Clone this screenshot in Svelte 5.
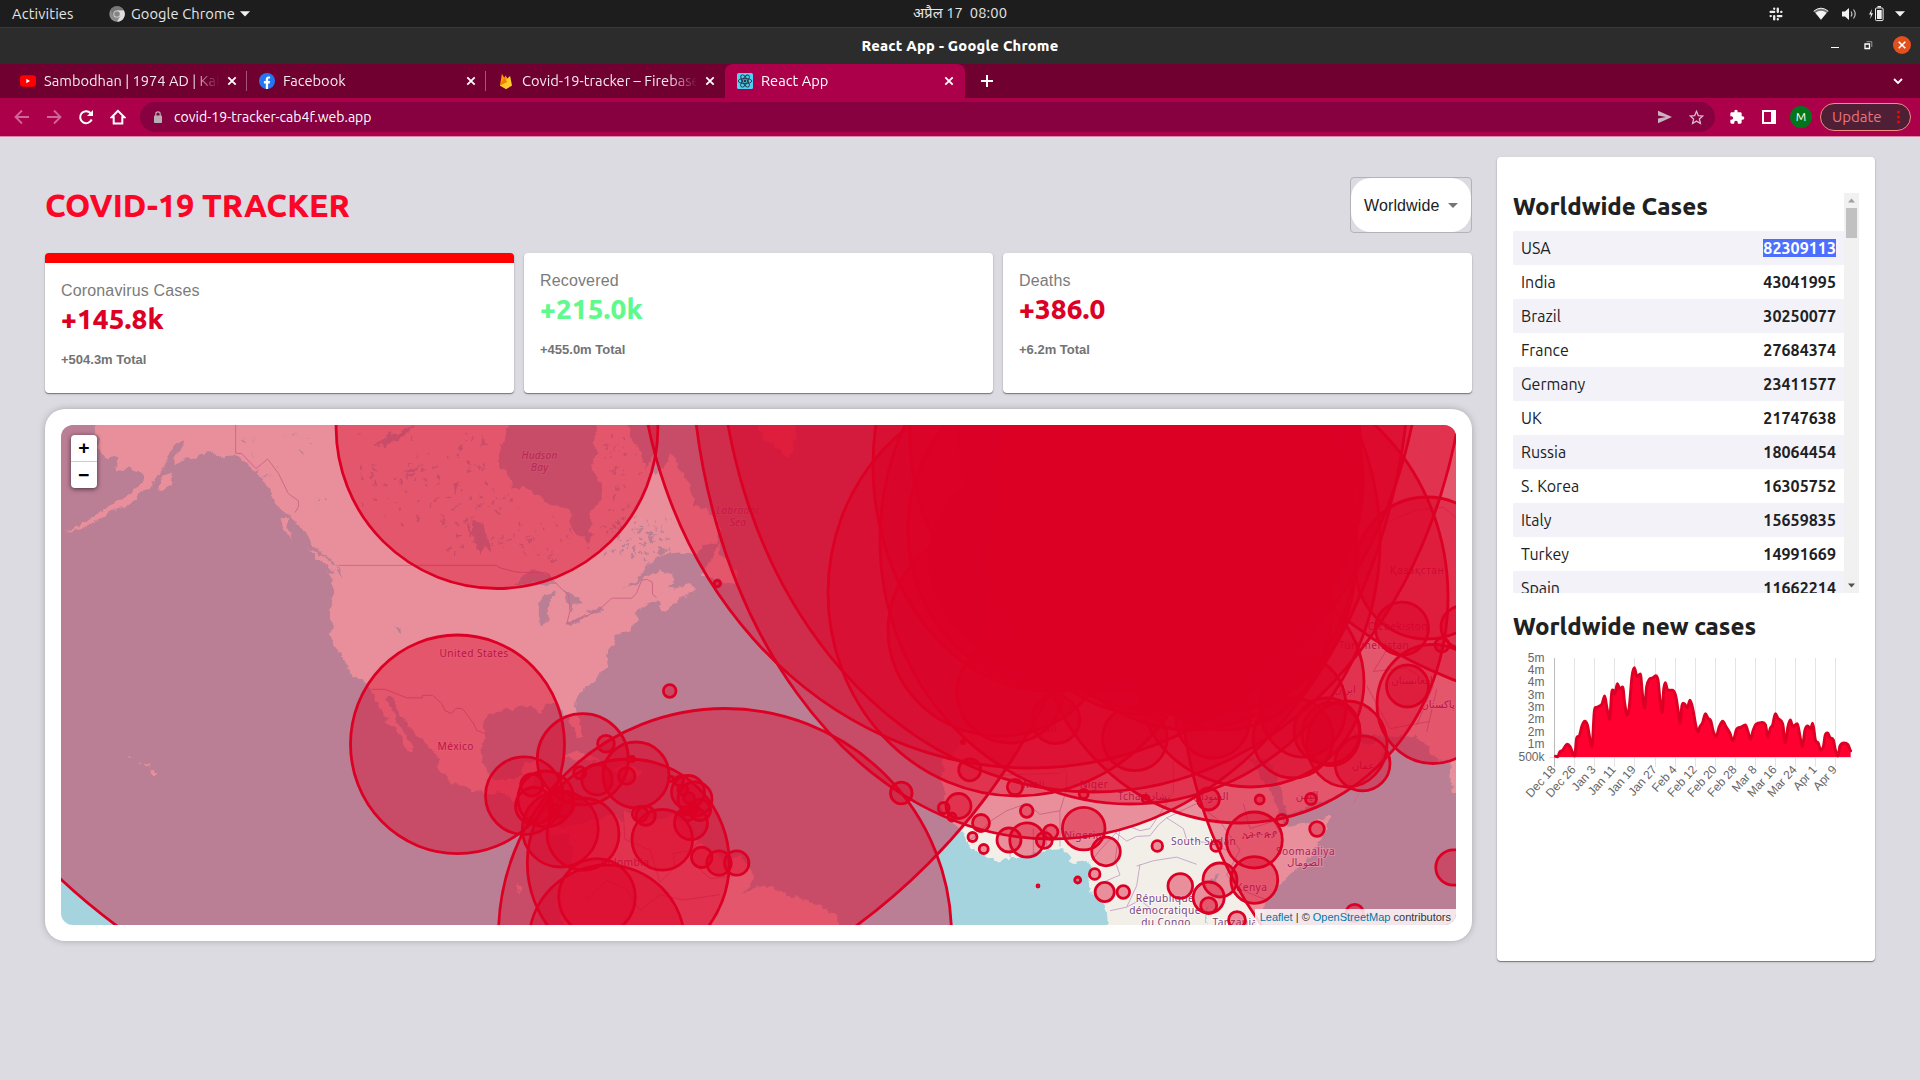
<script>
  const tabs = [
    { icon: 'youtube', label: 'Sambodhan | 1974 AD | Kat' },
    { icon: 'facebook', label: 'Facebook' },
    { icon: 'firebase', label: 'Covid-19-tracker – Firebase' },
    { icon: 'react', label: 'React App', active: true }
  ];

  const stats = [
    { title: 'Coronavirus Cases', value: '+145.8k', total: '+504.3m Total', selected: true },
    { title: 'Recovered', value: '+215.0k', total: '+455.0m Total', green: true },
    { title: 'Deaths', value: '+386.0', total: '+6.2m Total' }
  ];

  const countries = [
    ['USA', '82309113'], ['India', '43041995'], ['Brazil', '30250077'], ['France', '27684374'],
    ['Germany', '23411577'], ['UK', '21747638'], ['Russia', '18064454'], ['S. Korea', '16305752'],
    ['Italy', '15659835'], ['Turkey', '14991669'], ['Spain', '11662214']
  ];

  // Case circles: centre x, centre y, horizontal radius, optional vertical radius.
  const circles = [
    [486.5, 423, 624], [1030, 325, 392, 443], [1051, 339, 360, 500], [1093, 322, 374, 470],
    [1630, 667, 450], [1602, 289, 418], [725, 935, 226.5], [1240, 597, 208, 226],
    [1130, 540, 250, 264], [1017, 593, 189, 203], [1050, 465, 177, 226], [1251, 682, 113, 105],
    [1000, 630, 112, 106], [497, 427.6, 160.9], [457.5, 744.3, 107, 109.3], [1427, 568, 71, 71],
    [1060, 530, 152, 160], [1180, 480, 183, 190], [1120, 560, 190, 130], [1150, 600, 120, 110],
    [1190, 540, 167, 190], [1150, 500, 170, 215], [1225, 610, 107, 120], [1230, 560, 126, 150],
    [1215, 470, 146, 180], [1160, 440, 200, 210], [1080, 440, 170, 190],
    [1010, 692, 53, 51], [1055.7, 719.6, 24], [1134.8, 738.4, 32.3], [1213, 718, 37, 40],
    [1293, 738, 40], [1331, 734, 29, 31.6], [1327, 731, 33], [1347, 744, 40, 43],
    [1362.5, 763.4, 27.5], [1303, 707, 43, 50], [1433, 704, 56, 59.5], [1407.5, 686, 21],
    [1402, 628.6, 26.5], [1462, 627, 21], [1442, 645, 7], [969.7, 769.8, 11], [958.5, 806, 12.5],
    [943.7, 808, 5.5], [952, 817, 4], [981, 823, 8.5], [963, 742, 1.5], [1015, 787, 7.7],
    [1083.7, 794, 4.5], [1145.7, 799, 3.5], [1208.5, 799, 11], [1259.7, 799.5, 4.5], [1311, 799, 5.5],
    [1026.7, 811, 6.3], [972.5, 837, 4.5], [983.7, 849, 4.5], [1009, 840, 12], [1027, 840, 17.2],
    [1050.7, 832, 7.2], [1044.3, 840.4, 8], [1083.7, 828.6, 21.3], [1106, 851.5, 14.3], [1157.3, 846, 5.3],
    [1216, 846, 5.3], [1282, 820, 5.5], [1317, 829, 7.3], [1254.3, 840, 28], [1254.3, 880, 23.4],
    [1220, 880, 17], [1208.7, 897.5, 15.5], [1208.7, 905.7, 8], [1180.3, 886, 12.3], [1094.7, 874, 5.3],
    [1077.7, 880, 3], [1038, 886, 1], [1104.7, 892, 9.6], [1123.3, 892, 6.3], [1237, 920, 8.4],
    [1354.7, 913, 8.7], [1453.5, 867.5, 17.7], [628.3, 863, 101, 104], [582.8, 759.3, 45.6],
    [524.3, 795.7, 38.8], [636, 775, 33], [597, 779.7, 15.3], [606, 743.7, 8.4], [632, 759, 2.5],
    [626.7, 776, 8.3], [579.7, 772.7, 6], [545.8, 799, 28], [534, 806, 18.5], [531.7, 785, 11],
    [560.3, 829, 38], [583, 834, 36], [561, 804, 13], [554, 810, 5.5], [597, 897, 38.3],
    [606.7, 943, 78], [662.3, 839.8, 30.3], [640, 814, 7.7], [645.7, 815.7, 9.6], [691, 823, 16.5],
    [701.7, 857.3, 10.2], [719, 863, 12.2], [736.7, 863, 12.2], [688, 792, 16.5], [695, 799, 17],
    [700, 810, 10.5], [679, 781, 4.5], [671, 779, 2.5], [689, 798, 5.3], [683, 790, 5],
    [688, 815, 5.5], [685, 811, 4], [693, 808, 5], [669.7, 691, 6.3], [717.3, 583.6, 3.2], [901.3, 793, 10.8]
  ];

  const labels = [
    ['United States', 474, 657], ['México', 455.7, 750], ['Colombia', 625, 866],
    ['Mali', 1034, 788], ['Niger', 1094, 788], ['Tchad تشاد', 1144, 800], ['السودان', 1211, 800],
    ['Nigeria', 1083, 838.5], ['South Sudan', 1203.7, 845], ['ኢትዮጵያ', 1259.7, 838],
    ['Soomaaliya', 1305.5, 854.5], ['الصومال', 1305, 866], ['Kenya', 1251.7, 891],
    ['République', 1165, 901.5], ['démocratique', 1165, 913.5], ['du Congo', 1166, 925.5],
    ['Tanzania', 1235, 926], ['Қазақстан', 1417, 574], ['Oʻzbekiston', 1398, 630],
    ['Türkmenistan', 1374, 649], ['افغانستان', 1412, 684], ['پاکستان', 1438, 708],
    ['ایران', 1345, 693], ['عمان', 1363, 769], ['اليمن', 1307, 799], ['الجزائر', 1042, 732]
  ];
  const seaLabels = [
    ['Hudson', 539.5, 458.5], ['Bay', 539.5, 470.5], ['Labrador', 738, 514], ['Sea', 738, 526]
  ];

  // Small lakes scattered over the Canadian Shield and the Rockies.
  let seed = 11;
  const rand = () => (seed = (seed * 16807) % 2147483647) / 2147483647;
  const lakes = [];
  const scatter = (n, x, y, w, h, size) => {
    for (let i = 0; i < n; i++) {
      lakes.push({ x: x + rand() * w, y: y + rand() * h, rx: 2 + rand() * size, ry: 1 + rand() * size * 0.5, a: rand() * 180 - 90 });
    }
  };
  scatter(70, 960, 90, 400, 260, 8);
  scatter(50, 1200, 250, 260, 180, 6);
  scatter(60, 1710, 330, 190, 130, 8);
  scatter(35, 1690, 100, 110, 260, 7);
  scatter(35, 1430, 330, 300, 120, 6);
  scatter(18, 600, 90, 260, 190, 5);

  const curve = [
    226,589,233,590,240,575,248,571,262,553,270,560,284,588,290,535,298,528,306,498,314,484,322,495,336,560,
    343,455,350,443,366,432,374,408,380,440,389,478,395,400,399,390,405,402,412,371,419,386,428,381,434,430,
    442,466,448,440,456,350,463,323,471,350,481,342,487,400,494,444,500,380,508,358,518,354,527,347,534,360,
    540,420,547,457,551,390,556,368,563,391,578,391,587,408,594,450,600,490,606,437,613,431,622,444,630,421,
    638,445,648,500,654,516,660,500,668,488,676,461,684,475,692,482,700,515,708,530,718,500,728,484,738,500,
    750,520,759,543,770,508,782,502,796,495,804,515,811,538,820,510,828,493,843,488,856,494,864,532,871,505,
    878,495,886,461,894,475,908,492,916,549,924,500,931,480,938,500,952,491,960,530,967,560,975,510,983,498,
    992,507,998,490,1006,540,1014,548,1022,570,1030,560,1036,525,1043,519,1050,533,1060,540,1066,570,
    1074,588,1080,558,1092,549,1104,554,1112,572
  ];
  const pts = [];
  for (let i = 0; i < curve.length; i += 2) pts.push([(curve[i] - 99) / 3, (curve[i + 1] - 270) / 3]);
  const tangent = (i) => {
    const a = pts[i - 1], b = pts[i], c = pts[i + 1];
    if (!a || !c || (b[1] - a[1]) * (c[1] - b[1]) <= 0) return 0;
    return (c[1] - a[1]) / (c[0] - a[0]);
  };
  let line = `M${pts[0][0]} ${pts[0][1]}`;
  for (let i = 1; i < pts.length; i++) {
    const [ax, ay] = pts[i - 1], [bx, by] = pts[i];
    const h = (bx - ax) / 3;
    line += `C${ax + h} ${ay + h * tangent(i - 1)} ${bx - h} ${by - h * tangent(i)} ${bx} ${by}`;
  }
  const area = `${line}V107H42.3Z`;

  const ticks = ['Dec 18','Dec 26','Jan 3','Jan 11','Jan 19','Jan 27','Feb 4','Feb 12','Feb 20','Feb 28','Mar 8','Mar 16','Mar 24','Apr 1','Apr 9']
    .map((t, i) => ({ t, x: 41.5 + i * 20 + (i > 4 ? 1 : 0) }));
  const levels = [['5m', 8], ['4m', 20], ['4m', 32], ['3m', 45], ['3m', 57], ['2m', 69], ['2m', 82], ['1m', 94], ['500k', 107]];
</script>

{#snippet closeX()}
  <svg class="x" width="10" height="10" viewBox="0 0 10 10"><path d="M1.3 1.3l7.4 7.4M8.7 1.3L1.3 8.7" /></svg>
{/snippet}

<div class="screen">
  <header class="system">
    <span class="activities">Activities</span>
    <svg class="chrome" width="16" height="16" viewBox="0 0 16 16">
      <circle cx="8" cy="8" r="7.7" fill="#8b8b8b" /><path d="M8 4.2h6.8A7.7 7.7 0 0 1 8 15.7l3.4-5.8Z" fill="#dedede" />
      <path d="M1.3 4.2A7.7 7.7 0 0 1 14.8 4.3H8L4.6 10Z" fill="#777" />
      <circle cx="8" cy="8" r="3.6" fill="#ddd" /><circle cx="8" cy="8" r="2.8" fill="#858585" />
    </svg>
    <span class="appname">Google Chrome</span>
    <svg width="10" height="6" viewBox="0 0 10 6"><path d="M0 .3h10L5 5.6Z" fill="#f2f2f2" /></svg>
    <span class="clock">अप्रैल 17&nbsp; 08:00</span>
    <div class="tray">
      <svg width="14" height="14" viewBox="0 0 14 14" fill="none" stroke="#ededed" stroke-width="2.3" stroke-linecap="round">
        <path d="M5.2 1.6v.2M5.2 4.9H1.6M8.8 1.6v3.3M12.4 4.9h-.2M8.8 12.4v-.2M8.8 9.1h3.6M5.2 12.4V9.1M1.6 9.1h.2" />
      </svg>
      <svg class="wifi" width="16" height="14" viewBox="0 0 16 14"><path d="M.7 4.2Q8-1.8 15.3 4.2L8 12.8Z" fill="#777" /><path d="M.7 4.2Q8-1.8 15.3 4.2" fill="none" stroke="#f2f2f2" /><path d="M2.4 5.7Q8 2 13.6 5.7L8 12.8Z" fill="#f4f4f4" /></svg>
      <svg class="vol" width="15" height="14" viewBox="0 0 15 14"><path d="M0 4.5h3L7 1v12L3 9.5H0Z" fill="#f2f2f2" /><path d="M9 4.5q1.8 2.5 0 5M11.5 2.5q3.4 4.5 0 9" fill="none" stroke="#c4c4c4" stroke-width="1.2" /></svg>
      <svg class="bat" width="15" height="16" viewBox="0 0 15 16"><path d="M3 3L0 8.5h2L1.2 13 4 7.3H2.2Z" fill="#eee" /><rect x="6.5" y="2" width="7.6" height="12.6" rx="1" fill="none" stroke="#eee" /><path d="M8 4h4.7v9H8ZM8.5 0h3.5v1.5H8.5Z" fill="#eee" /></svg>
      <svg class="down" width="10" height="6" viewBox="0 0 10 6"><path d="M0 .3h10L5 5.6Z" fill="#f2f2f2" /></svg>
    </div>
  </header>

  <div class="titlebar">
    <strong>React App - Google Chrome</strong>
    <div class="winbtns">
      <svg width="8" height="10" viewBox="0 0 8 10"><path d="M0 7.500h8" stroke="#fff" /></svg>
      <svg width="9" height="9" viewBox="0 0 9 9"><path d="M1 3h4.500v4.500H1Z" fill="none" stroke="#fff" stroke-width="1.3" /><path d="M2.500 .7h5.300V6" fill="none" stroke="#999" /></svg>
      <svg width="18" height="18" viewBox="0 0 18 18"><circle cx="9" cy="9" r="9" fill="#e2501e" /><path d="M5.700 5.700l6.600 6.600M12.300 5.700l-6.600 6.600" stroke="#fff" stroke-width="1.6" /></svg>
    </div>
  </div>

  <nav class="tabs">
    {#each tabs as tab, i}
      <div class="tab" class:active={tab.active} class:sep={i < 2}>
        <svg width="16" height="16" viewBox="0 0 16 16">
          {#if tab.icon === 'youtube'}
            <rect y="2.2" width="16" height="11.6" rx="3" fill="#f00" /><path d="M6.3 5.8v4.4L10 8Z" fill="#fff" />
          {:else if tab.icon === 'facebook'}
            <circle cx="8" cy="8" r="8" fill="#2477f3" /><path d="M6.8 16v-5.6H4.9V8.1h1.900V6.600c0-2 1.100-3 2.800-3 .7 0 1.500.1 1.500.1v1.800h-.9c-.9 0-1.100.5-1.100 1.100v1.500h2l-.4 2.300H9.100V16Z" fill="#fff" />
          {:else if tab.icon === 'firebase'}
            <path d="M2 12.500L3.900.7l2.400 4.100 1.300-2.300 6 10.300L8 16Z" fill="#ff9900" /><path d="M2 12.600L12.100 3l1.900 9.600L8 16Z" fill="#ffcb2b" /><path d="M2 12.600L6.300 4.800l3 4.100Z" fill="#f57c00" />
          {:else}
            <rect width="16" height="16" rx="1.500" fill="#4fd0f5" />
            <g fill="none" stroke="#263845" stroke-width=".9"><ellipse cx="8" cy="8" rx="6.800" ry="2.600" /><ellipse cx="8" cy="8" rx="6.800" ry="2.600" transform="rotate(60 8 8)" /><ellipse cx="8" cy="8" rx="6.800" ry="2.600" transform="rotate(120 8 8)" /></g><circle cx="8" cy="8" r="1.400" fill="#263845" />
          {/if}
        </svg>
        <span class="tablabel">{tab.label}</span>
        {@render closeX()}
      </div>
    {/each}
    <svg class="plus" width="12" height="12" viewBox="0 0 12 12"><path d="M6 0v12M0 6h12" stroke="#fff" stroke-width="2" /></svg>
    <svg class="chev" width="10" height="7" viewBox="0 0 10 7"><path d="M1 1l4 4 4-4" fill="none" stroke="#fff" stroke-width="1.800" /></svg>
  </nav>

  <div class="toolbar">
    <svg class="dim" width="16" height="16" viewBox="0 0 16 16"><path d="M15 8H2M8 1.500L1.500 8 8 14.500" /></svg>
    <svg class="dim" width="16" height="16" viewBox="0 0 16 16"><path d="M1 8h13M8 1.500L14.500 8 8 14.500" /></svg>
    <svg class="lit" width="16" height="16" viewBox="0 0 16 16"><path d="M13.700 10.500A6 6 0 1 1 12.500 4" /><path d="M15 1v6H9Z" fill="#fff" stroke="none" /></svg>
    <svg class="lit" width="16" height="16" viewBox="0 0 16 16"><path d="M8 1.800L1.500 8.300H3.700V14.500h8.600V8.300h2.200Z" /></svg>
    <div class="omni">
      <svg width="10" height="13" viewBox="0 0 10 13"><rect x="1" y="4.500" width="8" height="7.500" rx=".8" fill="#b8aeb4" /><path d="M2.800 5V3a2.200 2.200 0 0 1 4.400 0v2" fill="none" stroke="#b8aeb4" stroke-width="1.200" /></svg>
      <span class="url">covid-19-tracker-cab4f.web.app</span>
      <svg width="14" height="14" viewBox="0 0 14 14"><path d="M0 .8L14 7 0 13.200V8.500L8 7 0 5.500Z" fill="#c9b3bf" /></svg>
      <svg width="15" height="15" viewBox="0 0 15 15"><path d="M7.500 1.300l1.800 4.300 4.500.4-3.400 3 1 4.500-3.900-2.400-3.900 2.400 1-4.500-3.400-3 4.500-.4Z" fill="none" stroke="#dbb8ca" stroke-width="1.300" /></svg>
    </div>
    <svg class="puzzle" width="16" height="16" viewBox="0 0 24 24"><path d="M20.5 11H19V7a2 2 0 0 0-2-2h-4V3.500a2.500 2.500 0 0 0-5 0V5H4a2 2 0 0 0-2 2v3.800h1.500a2.700 2.700 0 0 1 0 5.400H2V20a2 2 0 0 0 2 2h3.800v-1.500a2.700 2.700 0 0 1 5.400 0V22H17a2 2 0 0 0 2-2v-4h1.500a2.500 2.500 0 0 0 0-5Z" fill="#fff" /></svg>
    <svg class="side" width="14" height="14" viewBox="0 0 14 14"><path fill-rule="evenodd" d="M0 0h14v14H0ZM2 2v10h7V2Z" fill="#fff" /></svg>
    <span class="avatar">M</span>
    <div class="update">Update <svg width="3" height="14" viewBox="0 0 3 14" fill="#f00"><circle cx="1.500" cy="2" r="1.500" /><circle cx="1.500" cy="7" r="1.500" /><circle cx="1.500" cy="12" r="1.500" /></svg></div>
  </div>

  <main>
    <section class="left">
      <div class="head">
        <h1>COVID-19 TRACKER</h1>
        <div class="select"><div class="inner">Worldwide <svg width="10" height="5" viewBox="0 0 10 5"><path d="M0 0h10L5 5Z" fill="#757575" /></svg></div></div>
      </div>
      <div class="stats">
        {#each stats as s}
          <article class:selected={s.selected}>
            <p>{s.title}</p>
            <h2 class:green={s.green}>{s.value}</h2>
            <small>{s.total}</small>
          </article>
        {/each}
      </div>
      <div class="mapcard">
        <div class="map">
          <svg width="1395" height="500" viewBox="61 425 1395 500">
            <filter id="coast" x="-5%" y="-5%" width="110%" height="110%" color-interpolation-filters="sRGB">
              <feTurbulence type="fractalNoise" baseFrequency=".045" numOctaves="3" seed="4" />
              <feDisplacementMap in="SourceGraphic" scale="22" xChannelSelector="R" yChannelSelector="G" />
            </filter>
            <rect x="61" y="425" width="1395" height="500" fill="#a5d4df" />
            <!-- Land, lakes and borders on a finer grid than the page -->
            <g transform="translate(40 400) scale(.333333 .357143)">
              <g filter="url(#coast)">
              <g fill="#f2efe9">
                <path d="M175 30L165 92 182 108 172 130 196 160 225 158 232 200 262 192 300 205 312 222 290 244 262 266 235 283 205 300 175 318 130 344 75 374 115 364 155 345 192 324 225 306 262 300 290 270 330 248 352 215 370 195 382 165 392 140 410 122 435 112 425 138 402 160 405 183 432 165 470 160 500 147 540 158 585 155 620 175 648 203 665 215 680 245 700 270 705 290 728 310 745 322 770 345 800 375 815 405 850 430 885 455 905 475 903 500 892 480 865 485 880 520 878 560 870 605 876 630 872 660 885 690 905 715 920 745 938 775 970 785 990 800 1003 830 1025 870 1045 892 1033 900 1070 925 1085 950 1100 975 1120 986 1127 975 1100 945 1080 910 1062 878 1035 835 1045 828 1062 835 1075 870 1100 905 1130 940 1165 965 1195 1000 1193 1030 1225 1065 1260 1075 1300 1093 1340 1105 1380 1098 1410 1115 1430 1140 1480 1180 1520 1210 1560 1215 1585 1220 1600 1280 1560 1363 1555 1420 1580 1510H2410L2390 1445 2340 1415 2310 1405 2240 1385 2200 1365 2150 1362 2105 1385 2142 1340 2140 1325 2100 1275 2050 1290 1975 1240 1945 1190 1900 1165 1850 1172 1800 1165 1750 1150 1748 1180 1720 1158 1640 1180 1600 1192 1560 1200 1540 1170 1545 1110 1530 1090 1475 1085 1482 1062 1500 1025 1488 1010 1455 1020 1440 1055 1400 1065 1355 1060 1335 1030 1325 990 1335 935 1330 905 1345 885 1370 875 1400 862 1430 868 1450 855 1480 860 1500 875 1520 855 1560 850 1572 872 1585 895 1600 918 1615 945 1627 940 1620 905 1605 862 1608 835 1630 810 1660 790 1685 765 1702 745 1695 715 1715 690 1722 660 1765 648 1790 625 1785 600 1800 582 1830 570 1850 560 1862 585 1880 590 1900 570 1935 550 1972 530 1955 515 1910 530 1890 525 1900 500 1895 485 1860 480 1830 490 1790 515 1750 530 1790 505 1820 465 1860 435 1920 430 1965 435 1990 410 2030 400 2042 360 2025 330 2000 305 1965 295 1950 250 1920 190 1890 145 1885 170 1850 210 1832 200 1845 140 1820 190 1805 150 1775 110 1750 30Z" />
                <path d="M355 245L372 215 400 205 388 240 362 258ZM722 330L745 332 742 360 758 388 730 365ZM805 415L850 436 903 475 885 480 840 452ZM332 1035L342 1032 352 1044 333 1053ZM308 1018l20 3 3 6-12-3ZM293 1008l8 6-6 0ZM262 998l14 0-5 5ZM1980 490L2020 440 2035 400 2042 430 2070 460 2095 490 2090 515 2050 510 2020 500ZM2135 30L2170 110 2210 130 2245 165 2260 150 2275 30ZM1565 998L1610 985 1660 998 1700 1020 1640 1005 1590 1003ZM1710 1035L1760 1020 1810 1045 1760 1055ZM1430 1358l15 8-5 14-12-6Z" />
                <path d="M2900 30H4290V1110L4238 1100 4230 1005 4190 1010 4130 940 4040 945 3940 930 3960 960 4040 965 4020 1010 3960 1070 3860 1120 3735 1165 3725 1180 3750 1195 3820 1180 3868 1168 3860 1200 3820 1270 3760 1320 3720 1360 3675 1410 3660 1510H3208L3205 1450 3190 1420 3170 1390 3150 1375 3145 1340 3155 1310 3145 1290 3110 1295 3090 1290 3070 1258 3020 1260 2970 1275 2910 1280 2865 1292 2820 1270 2780 1240 2770 1215 2750 1190 2700 1160 2705 1130 2715 1100 2705 1060 2710 1010 2750 980 2770 940 2800 860Z" />
              </g>
              <g fill="#a5d4df">
                <path d="M1425 30L1390 110 1377 150 1378 195 1400 198 1418 248 1450 243 1490 265 1530 295 1590 305 1592 350 1625 385 1645 403 1652 360 1650 312 1685 275 1683 235 1655 200 1670 150 1662 110 1685 30Z" />
                <path d="M1422 518L1480 472 1530 490 1548 520 1500 512ZM1495 580L1505 545 1555 535 1530 560 1520 620 1500 630ZM1570 535L1610 550 1630 570 1598 570 1592 600 1577 560ZM1575 628L1605 612 1650 600 1620 620 1585 634ZM1640 590L1680 578 1695 588 1650 600Z" />
                <path d="M1275 345L1290 352 1300 375 1305 340 1322 340 1345 380 1350 425 1332 405 1318 432 1300 385ZM1000 122L1035 110 1050 82 1060 100 1110 72H1128L1070 115 1030 132ZM1080 205l70-25-30 20ZM1240 235l20-10-12 40ZM1065 632l12 2 5 14-10-5ZM3630 1000L3690 1010 3710 1060 3735 1150 3760 1165 3740 1183 3720 1160 3700 1110 3665 1060ZM3505 1345l30-20-5 22-20 10ZM3495 1410l8 60h-8Z" />
                {#each lakes as l}<ellipse cx={l.x} cy={l.y} rx={l.rx} ry={l.ry} transform="rotate({l.a} {l.x} {l.y})" />{/each}
              </g>
              </g>
              <g class="borders">
                <path d="M895 463H1370L1380 470 1430 482 1520 484 1560 525 1585 545 1590 590 1580 628 1640 605 1680 585 1715 555H1775L1790 540 1805 505 1820 502 1837 510 1838 545 1850 553M587 70V149L605 150 648 192 683 165 715 205 745 262 775 282V300L765 315M995 810H1035L1100 834H1147V827H1178L1205 850 1215 870 1235 878 1248 863 1268 865 1300 905 1310 925 1335 934" />
                <path d="M1750 1160L1755 1230 1830 1260 1860 1350 1905 1310 1900 1270 1960 1260 1970 1240M1640 1400L1700 1345 1760 1370 1800 1430 1860 1385 1930 1400 2040 1385M1975 1310L2010 1340 2100 1330" />
                <path d="M2780 1240L2820 1210 2850 1180 2900 1150 2960 1130 3000 1160 3060 1150 3080 1090V1040M2890 1050L3060 1045 3100 1010M3400 1010V1100L3380 1130 3330 1200 3300 1206 3270 1195 3240 1200 3232 1245 3225 1290 3240 1330 3190 1350M3225 1210L3260 1235 3290 1222 3330 1220 3355 1190 3380 1170 3430 1200 3440 1230 3500 1240 3560 1260M3380 1170L3470 1130 3540 1180 3600 1260M3290 1305L3340 1290 3410 1280 3470 1300M3300 1300L3290 1360 3260 1420 3210 1430M3610 1130L3630 1200 3700 1180 3720 1210M2980 1200V1275M3020 1200V1258M2910 1240V1280M3600 1260L3560 1330 3600 1370 3680 1400M3060 1150V1250M3240 1200L3180 1260 3155 1290M3340 1430L3300 1400 3260 1420" />
                <path d="M3940 1130L4000 1030M3980 800L4050 920 4170 900M4040 345L4120 310 4210 300 4248 330M4040 700L4000 760 4100 750 4180 800 4130 910M4190 810L4160 930" />
              </g>
            </g>
            <g class="names">
              {#each labels as [t, x, y]}<text {x} {y}>{t}</text>{/each}
            </g>
            <g class="names sea">
              {#each seaLabels as [t, x, y]}<text {x} {y}>{t}</text>{/each}
            </g>
            <g class="circles">
              {#each circles as [cx, cy, rx, ry]}<ellipse {cx} {cy} {rx} ry={ry ?? rx} />{/each}
            </g>
          </svg>
          <div class="zoom"><span>+</span><span>−</span></div>
          <div class="credit"><a href="#leaflet">Leaflet</a> | © <a href="#osm">OpenStreetMap</a> contributors</div>
        </div>
      </div>
    </section>

    <aside>
      <div class="scroll">
        <div class="listing">
          <h3>Worldwide Cases</h3>
          {#each countries as [name, n], i}
            <div class="row"><span>{name}</span><b class:hl={i === 0}>{n}</b></div>
          {/each}
        </div>
        <div class="bar">
          <svg width="15" height="15" viewBox="0 0 15 15"><path d="M4 9.500h7L7.500 5.500Z" fill="#a0a0a0" /></svg>
          <i></i>
          <svg class="bottom" width="15" height="15" viewBox="0 0 15 15"><path d="M4 5.500h7L7.500 9.500Z" fill="#505050" /></svg>
        </div>
      </div>
      <h3 class="second">Worldwide new cases</h3>
      <svg class="chart" width="346" height="160" viewBox="0 0 346 160">
        {#each ticks as k, i}
          <path d="M{k.x} 8V117" stroke={i === 0 ? '#bbb' : '#e4e4e4'} />
          <text class="tick" transform="translate({k.x + 2} 120) rotate(-48)">{k.t}</text>
        {/each}
        <path d="M36 107.500H338" stroke="#e4e4e4" />
        {#each levels as [t, y]}<text class="tick" x="31.500" y={y + 4}>{t}</text>{/each}
        <path d={area} fill="#ff0030" />
        <path d={line} fill="none" stroke="#dd0025" stroke-width="3" stroke-linejoin="round" stroke-linecap="round" />
      </svg>
    </aside>
  </main>
</div>

<style>
  :global(body) { margin: 0; }
  .screen {
    width: 1920px; height: 1080px; overflow: hidden; display: flex; flex-direction: column;
    background: #dcdbe1; font-family: Ubuntu, "Noto Sans", "Open Sans", sans-serif; color: #202124;
  }
  svg { display: block; flex: none; }
  .system { height: 27px; background: #1d1d1d; display: flex; align-items: center; color: #e6e6e6; font-size: 14.670px; position: relative; }
  .activities { width: 97px; padding-left: 12px; letter-spacing: .15px; }
  .appname { margin: 0 5px 0 6px; width: 104px; white-space: nowrap; letter-spacing: .08px; }
  .clock { position: absolute; left: 0; right: 0; text-align: center; top: 4px; line-height: 18px; letter-spacing: .1px; }
  .tray { margin-left: auto; display: flex; align-items: center; padding-right: 15px; }
  .wifi { margin-left: 30px; } .vol { margin-left: 13px; } .bat { margin-left: 12px; } .down { margin-left: 11px; }
  .titlebar { height: 37px; border-top: 1px solid #3a3a3a; background: #2c2c2c; box-sizing: border-box; display: flex; align-items: center; justify-content: center; color: #fff; font-size: 14.670px; position: relative; }
  .titlebar strong { font-weight: 800; letter-spacing: .22px; padding-bottom: 2px; }
  .winbtns { position: absolute; right: 9px; top: 8px; display: flex; align-items: center; gap: 25px; }
  .winbtns svg:last-child { margin-left: -5px; }
  .tabs { height: 34px; background: #700030; display: flex; align-items: center; color: #f5e9ee; font-size: 14.670px; padding-left: 8px; }
  .tab { width: 239px; height: 34px; box-sizing: border-box; display: flex; align-items: center; padding: 0 10px 0 12px; gap: 8px; position: relative; }
  .tab.sep::after { content: ''; position: absolute; right: 0; top: 7px; width: 1px; height: 20px; background: #a3557a; }
  .tab.active { background: #ad004b; border-radius: 8px 8px 0 0; width: 240px; color: #fff; padding-right: 11px; }
  .tablabel { flex: 1; overflow: hidden; white-space: nowrap; padding-bottom: 2px; mask-image: linear-gradient(90deg, #000 84%, transparent); }
  .x path { stroke: #fff; stroke-width: 1.8; }
  .plus { margin-left: 16px; } .chev { margin-left: auto; margin-right: 17px; }
  .toolbar { height: 38px; background: #ad004b; display: flex; align-items: center; padding-left: 14px; gap: 16px; border-bottom: 1px solid #d984a9; }
  .dim path { fill: none; stroke: #d0669a; stroke-width: 1.8; }
  .lit path { fill: none; stroke: #fff; stroke-width: 2; }
  .lit path[stroke='none'] { fill: #fff; stroke: none; }
  .omni { width: 1575px; height: 30px; box-sizing: border-box; border-radius: 15px; background: #870040; display: flex; align-items: center; gap: 17px; padding: 0 11px 0 13px; margin-left: -2px; flex: none; }
  .omni svg:first-child { margin-right: -6px; }
  .url { flex: 1; color: #fff; font-size: 14px; letter-spacing: .03px; }
  .puzzle { margin-left: -2px; }
  .side { margin-left: 1px; }
  .avatar { width: 22px; height: 22px; margin-left: -2px; border-radius: 50%; background: #03761c; color: #fff; font-size: 12px; line-height: 22px; text-align: center; flex: none; }
  .update { width: 91px; height: 28px; box-sizing: border-box; margin-left: -8px; border: 1px solid #f28b82; border-radius: 14px; background: #4f2035; color: #f0727a; display: flex; align-items: center; justify-content: space-between; font-size: 15px; padding: 0 10px 1px 11px; flex: none; }

  main { display: flex; gap: 25px; padding: 20px 45px 0; align-items: flex-start; }
  .left { width: 1427px; flex: none; }
  .head { padding-top: 20px; display: flex; justify-content: space-between; height: 56px; align-items: center; }
  h1 { margin: 0; color: #fc0628; font-size: 32px; font-weight: 800; line-height: 40px; letter-spacing: .05px; }
  .select { width: 122px; height: 56px; box-sizing: border-box; border: 1px solid #b3b2b8; border-radius: 4px; }
  .inner { height: 54px; box-sizing: border-box; border-radius: 20px; background: #fff; display: flex; align-items: center; justify-content: space-between; padding: 1px 13px 0; font: 16px "Liberation Sans", sans-serif; letter-spacing: .12px; color: #212121; }
  .stats { display: flex; gap: 10px; margin-top: 20px; }
  article { flex: 1; height: 140px; box-sizing: border-box; background: #fff; border-radius: 4px; padding: 16px; box-shadow: 0 1px 1px #00000066, 0 1px 3px #00000022; }
  article.selected { border-top: 10px solid red; }
  article p { margin: 2px 0 0; color: #7b7b7b; font: 16px/20px "Liberation Sans", sans-serif; letter-spacing: .15px; }
  article h2 { margin: -1px 0 0; color: #dd0025; font-size: 28px; font-weight: 800; line-height: 38px; letter-spacing: .1px; }
  article h2.green { color: #60fa8c; }
  article small { display: block; margin-top: 12px; color: #737373; font: bold 13px/20px "Liberation Sans", sans-serif; }
  .mapcard { margin-top: 16px; background: #fff; border-radius: 20px; padding: 16px; box-shadow: 0 0 8px -2px #00000066; }
  .map { width: 1395px; height: 500px; border-radius: 12px; overflow: hidden; position: relative; }
  .circles ellipse { fill: #dd0025; fill-opacity: .4; stroke: #dd0025; stroke-width: 2.8; }
  .borders path { fill: none; stroke: #c9aac9; stroke-width: 1px; vector-effect: non-scaling-stroke; }
  .names text { font: 10.200px "Noto Sans", "DejaVu Sans", sans-serif; letter-spacing: .4px; text-anchor: middle; fill: #7c4581; stroke: #fff; stroke-width: 2px; stroke-opacity: .6; paint-order: stroke; }
  .names.sea text { font-style: italic; fill: #6577b5; stroke-opacity: .2; letter-spacing: .2px; }
  .zoom { position: absolute; left: 10px; top: 10px; width: 26px; background: #fff; border-radius: 4px; box-shadow: 0 1px 5px #000000a6; font: bold 18px/26px "DejaVu Sans Mono", "Liberation Mono", monospace; text-align: center; color: #000; }
  .zoom span { display: block; height: 26px; }
  .zoom span:first-child { border-bottom: 1px solid #ccc; }
  .credit { position: absolute; right: 0; bottom: 0; height: 16px; padding: 0 5px; background: #ffffffd0; color: #333; font: 11px/16px "Liberation Sans", sans-serif; }
  .credit a { color: #0078a8; text-decoration: none; }

  aside { width: 378px; height: 804px; box-sizing: border-box; background: #fff; border-radius: 4px; padding: 36px 16px 0; box-shadow: 0 1px 1px #00000066, 0 1px 3px #00000022; }
  .scroll { height: 400px; overflow: hidden; display: flex; }
  .listing { width: 331px; }
  h3 { margin: 0; height: 38px; line-height: 27px; font-size: 24px; font-weight: 800; color: #212121; letter-spacing: -.02px; white-space: nowrap; }
  .row { height: 34px; padding: 0 8px 1px; box-sizing: border-box; display: flex; justify-content: space-between; align-items: center; font-size: 16px; }
  .row:nth-of-type(odd) { background: #f3f2f8; }
  .row b { line-height: 18px; letter-spacing: .06px; }
  .row b.hl { background: #4d6fff; color: #fff; }
  .bar { width: 15px; background: #f1f1f1; display: flex; flex-direction: column; align-items: center; }
  .bar i { width: 11px; height: 30px; background: #c1c1c1; }
  .bottom { margin-top: auto; }
  .second { margin-top: 20px; height: 37px; }
  .chart { overflow: visible; }
  .tick { font: 12px "Liberation Sans", sans-serif; fill: #666; text-anchor: end; }
</style>
